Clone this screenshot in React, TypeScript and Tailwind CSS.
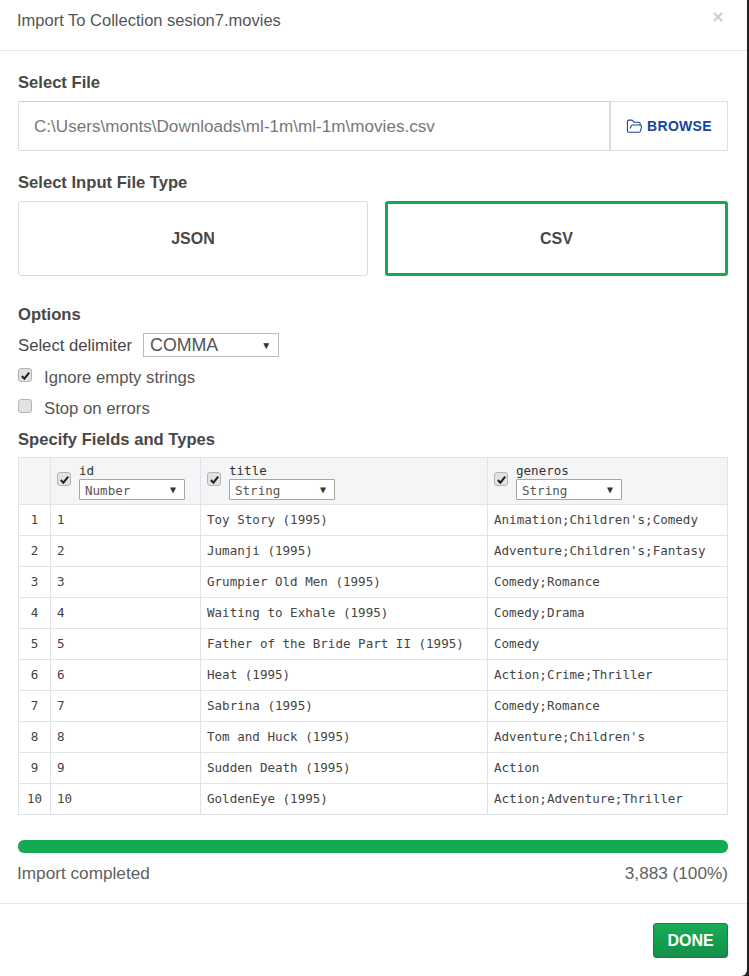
import { FolderOpen, X } from "lucide-react";

const rows = [
  ["1", "Toy Story (1995)", "Animation;Children's;Comedy"],
  ["2", "Jumanji (1995)", "Adventure;Children's;Fantasy"],
  ["3", "Grumpier Old Men (1995)", "Comedy;Romance"],
  ["4", "Waiting to Exhale (1995)", "Comedy;Drama"],
  ["5", "Father of the Bride Part II (1995)", "Comedy"],
  ["6", "Heat (1995)", "Action;Crime;Thriller"],
  ["7", "Sabrina (1995)", "Comedy;Romance"],
  ["8", "Tom and Huck (1995)", "Adventure;Children's"],
  ["9", "Sudden Death (1995)", "Action"],
  ["10", "GoldenEye (1995)", "Action;Adventure;Thriller"],
];

function Check({ checked = true }: { checked?: boolean }) {
  return (
    <span className="flex h-[14px] w-[14px] shrink-0 items-center justify-center rounded-[3px] border border-[#b4b4b4] bg-[#e2e2e2]">
      {checked && (
        <svg viewBox="0 0 12 12" className="h-[11px] w-[11px]">
          <path d="M2 6.5 L4.8 9.5 L10 2.8" fill="none" stroke="#222" strokeWidth="2.2" />
        </svg>
      )}
    </span>
  );
}

function FieldHead({ name, type }: { name: string; type: string }) {
  return (
    <div className="flex items-start gap-[8px] pl-[6px]">
      <div className="mt-[10px]">
        <Check />
      </div>
      <div className="flex flex-col">
        <span className="text-[12.55px] leading-[17px] text-[#333]">{name}</span>
        <div className="flex h-[21px] w-[106px] items-center justify-between rounded-[1px] border border-[#a6a6a6] bg-white pl-[5px] pr-[8px]">
          <span className="pt-[4px] text-[12.55px] leading-none text-[#555]">{type}</span>
          <span className="text-[10px] leading-none text-[#333]">▼</span>
        </div>
      </div>
    </div>
  );
}

export default function App() {
  return (
    <div className="h-[976px] w-[749px] overflow-hidden bg-[#222]">
      <div className="flex h-[976px] w-[747px] flex-col rounded-br-[6px] bg-white font-['Liberation_Sans',Arial,sans-serif] text-[#494747]">
        <header className="flex h-[51px] shrink-0 justify-between border-b border-[#e7e7e7] pl-[17px] pr-[22px] pt-[10px]">
          <h1 className="text-[16.5px] leading-[20px] text-[#555]">Import To Collection sesion7.movies</h1>
          <X size={14} strokeWidth={4} className="text-[#cfcfcf]" />
        </header>

        <main className="flex flex-1 flex-col pl-[18px] pr-[19px]">
          <h2 className="mt-[21px] pt-[1px] text-[16.6px] leading-[20px] font-bold">Select File</h2>
          <div className="mt-[8px] flex h-[50px]">
            <div className="flex flex-1 items-center rounded-l-[2px] border border-r-2 border-[#dcdcdc] border-t-[#d0d0d0] pl-[15px] pt-[2px] text-[17.1px] text-[#777]">
              C:\Users\monts\Downloads\ml-1m\ml-1m\movies.csv
            </div>
            <div className="flex w-[117px] items-center justify-center gap-[4px] border border-l-0 border-[#e3e3e3] text-[14px] font-bold tracking-[0.3px] text-[#13479c]">
              <FolderOpen size={17} strokeWidth={1.5} />
              BROWSE
            </div>
          </div>

          <h2 className="mt-[21px] pt-[1px] text-[16.6px] leading-[20px] font-bold">Select Input File Type</h2>
          <div className="mt-[8px] flex h-[75px] gap-[17px]">
            <div className="flex w-[350px] items-center justify-center rounded-[3px] border border-[#dcdcdc] pt-[1px] text-[16px] font-bold">
              JSON
            </div>
            <div className="flex flex-1 items-center justify-center rounded-[3px] border-[3px] border-[#13aa52] pt-[1px] text-[16px] font-bold">
              CSV
            </div>
          </div>

          <h2 className="mt-[28px] pt-[1px] text-[16.6px] leading-[20px] font-bold">Options</h2>
          <div className="mt-[8px] flex h-[24px] items-center gap-[11px]">
            <span className="pt-[2px] text-[16.7px]">Select delimiter</span>
            <div className="flex h-[24px] w-[136px] items-center justify-between border border-[#bbb] pl-[6px] pr-[7px]">
              <span className="text-[17.8px] text-[#555]">COMMA</span>
              <span className="text-[10px] text-[#333]">▼</span>
            </div>
          </div>
          <label className="mt-[9px] flex h-[22px] items-center gap-[12px] text-[16.7px] text-[#555]">
            <span className="mb-[4px]"><Check /></span>
            <span className="pt-[2px]">Ignore empty strings</span>
          </label>
          <label className="mt-[9px] flex h-[22px] items-center gap-[12px] text-[16.7px] text-[#555]">
            <span className="mb-[4px]"><Check checked={false} /></span>
            <span className="pt-[2px]">Stop on errors</span>
          </label>
          <h2 className="mt-[10px] pt-[1px] text-[16.6px] leading-[20px] font-bold">Specify Fields and Types</h2>

          <table className="mt-[7px] w-[710px] table-fixed border-collapse font-['DejaVu_Sans_Mono',monospace] text-[12.55px] text-[#444]">
            <colgroup>
              <col className="w-[32px]" />
              <col className="w-[150px]" />
              <col className="w-[287px]" />
              <col />
            </colgroup>
            <thead>
              <tr className="h-[47px] bg-[#f4f5f6]">
                <th className="border border-[#e1e3e6]" />
                <th className="border border-[#e1e3e6] text-left font-normal">
                  <FieldHead name="id" type="Number" />
                </th>
                <th className="border border-[#e1e3e6] text-left font-normal">
                  <FieldHead name="title" type="String" />
                </th>
                <th className="border border-[#e1e3e6] text-left font-normal">
                  <FieldHead name="generos" type="String" />
                </th>
              </tr>
            </thead>
            <tbody>
              {rows.map((r) => (
                <tr key={r[0]} className="h-[31px]">
                  <td className="border border-[#e1e3e6] pt-[1px] text-center">{r[0]}</td>
                  <td className="border border-[#e1e3e6] pl-[6px] pt-[1px]">{r[0]}</td>
                  <td className="border border-[#e1e3e6] pl-[6px] pt-[1px]">{r[1]}</td>
                  <td className="border border-[#e1e3e6] pl-[6px] pt-[1px]">{r[2]}</td>
                </tr>
              ))}
            </tbody>
          </table>

          <div className="mt-[25px] h-[13px] rounded-[6px] bg-[#13aa52]" />
          <div className="mt-[10px] flex justify-between text-[17.2px] leading-[20px] text-[#616161]">
            <span className="-ml-[1px]">Import completed</span>
            <span>3,883 (100%)</span>
          </div>
        </main>

        <footer className="flex h-[73px] shrink-0 items-start justify-end border-t border-[#e7e7e7] pr-[19px] pt-[19px]">
          <button className="h-[35px] w-[75px] rounded-[3px] border border-[#158242] bg-gradient-to-b from-[#18ad56] to-[#138f47] text-[16px] font-bold text-white">
            DONE
          </button>
        </footer>
      </div>
    </div>
  );
}
